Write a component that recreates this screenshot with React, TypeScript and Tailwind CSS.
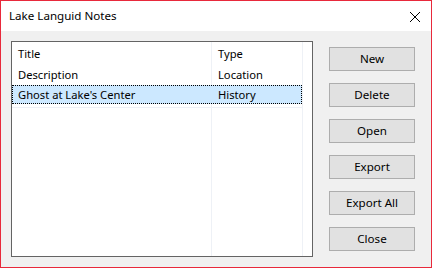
import React from "react";

const rows = [
  { title: "Title", type: "Type", h: "h-[22px]" },
  { title: "Description", type: "Location", h: "h-[21px]" },
];

const buttons = ["New", "Delete", "Open", "Export", "Export All", "Close"];

export default function App() {
  return (
    <div
      className="w-[432px] h-[268px] border border-[#e8293b] flex flex-col text-[11.2px] text-black"
      style={{ fontFamily: '"Noto Sans", "Segoe UI", sans-serif' }}
    >
      {/* title bar */}
      <div className="h-[30px] bg-white flex items-center justify-between pl-[8px] pr-[10px]">
        <span className="text-[11.6px] leading-none">Lake Languid Notes</span>
        <svg width="12" height="12" viewBox="0 0 12 12" className="mt-[1px]">
          <path d="M1 1 L11 11 M11 1 L1 11" stroke="#000" strokeWidth="1" />
        </svg>
      </div>

      {/* body */}
      <div className="flex-1 bg-[#f0f0f0] flex pl-[10px] pt-[10px] gap-[16px]">
        {/* list view */}
        <div className="w-[302px] h-[216px] border border-[#646464] bg-white relative">
          <div className="absolute top-0 bottom-0 left-[199px] w-px bg-[#eef1f6]" />
          <div className="absolute top-0 bottom-0 left-[290px] w-px bg-[#eef1f6]" />
          {rows.map((r) => (
            <div key={r.title} className={`${r.h} flex items-center pt-[2px] relative`}>
              <div className="w-[200px] pl-[6px]">{r.title}</div>
              <div className="pl-[6px]">{r.type}</div>
            </div>
          ))}
          <div className="h-[19px] w-[290px] bg-[#cce8ff] border border-dotted border-black flex items-center pt-[1px] relative">
            <div className="w-[199px] pl-[5px]">Ghost at Lake's Center</div>
            <div className="pl-[6px]">History</div>
          </div>
          <div className="h-px w-[290px] bg-[#eef1f6] mt-[3px]" />
        </div>

        {/* buttons */}
        <div className="flex flex-col gap-[12px] pt-[6px]">
          {buttons.map((b) => (
            <button
              key={b}
              className="w-[86px] h-[24px] bg-[#e1e1e1] border border-[#adadad] text-[11.6px] flex items-center justify-center"
            >
              {b}
            </button>
          ))}
        </div>
      </div>
    </div>
  );
}
